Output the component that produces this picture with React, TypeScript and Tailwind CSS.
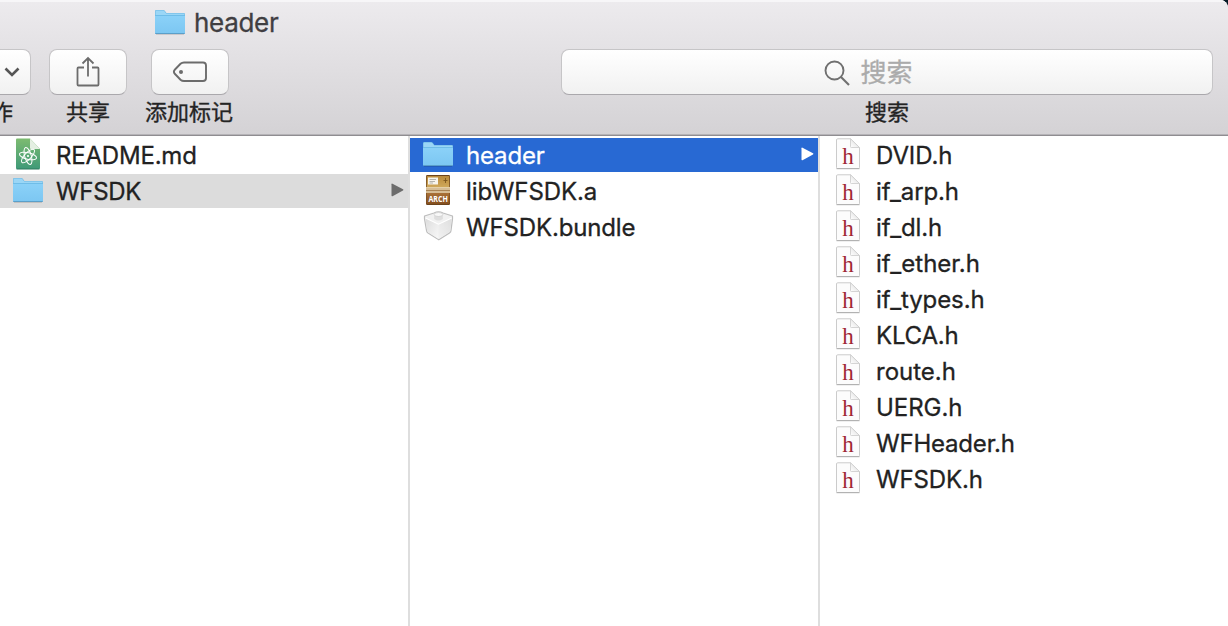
import React from "react";

function Folder() {
  return (
    <svg width="32" height="28" viewBox="0 0 32 28" className="block shrink-0">
      <defs>
        <linearGradient id="folderFace" x1="0" y1="0" x2="0" y2="1">
          <stop offset="0" stopColor="#8bd1f8" />
          <stop offset="1" stopColor="#7cc7f2" />
        </linearGradient>
      </defs>
      <g transform="translate(0 -1)">
        <path d="M1 3.200Q1 2 2.200 2H9.200Q10.200 2 10.800 2.800L12.400 5H29.800Q31 5 31 6.200V25.500H1Z" fill="#6ab6e2" />
        <path d="M1.500 3.300Q1.500 2.500 2.300 2.500H9.100Q9.900 2.500 10.500 3.300L12.200 5.600H30.500V7H1.500Z" fill="#9ad6f6" />
        <path d="M1 7.500H31V24.500Q31 25.500 30 25.500H2Q1 25.500 1 24.500Z" fill="url(#folderFace)" />
        <path d="M1 7.500H31" stroke="#6fbde8" strokeWidth="1" />
        <path d="M1.300 25.500H30.700" stroke="#5b9fc9" strokeWidth="1" />
        <path d="M2 26.500H30" stroke="#000" strokeOpacity=".12" strokeWidth="1" />
      </g>
    </svg>
  );
}

function Markdown() {
  return (
    <svg width="32" height="34" viewBox="0 0 32 34" className="block shrink-0">
      <defs>
        <linearGradient id="mdFill" x1="0" y1="0" x2="0" y2="1">
          <stop offset="0" stopColor="#7dbb70" />
          <stop offset="1" stopColor="#3f9a78" />
        </linearGradient>
      </defs>
      <path d="M4 1.500Q4 .5 5 .5H18L28 11V30Q28 31 27 31H5Q4 31 4 30Z" fill="url(#mdFill)" />
      <path d="M4.500 31H27.500" stroke="#2f7a5e" strokeWidth="1" />
      <path d="M18 .5L28 11H19Q18 11 18 10Z" fill="#e4efe2" />
      <g fill="none" stroke="#fff" strokeWidth="1">
        <ellipse cx="16" cy="18" rx="8.800" ry="3.300" transform="rotate(14 16 18)" />
        <ellipse cx="16" cy="18" rx="8.800" ry="3.300" transform="rotate(74 16 18)" />
        <ellipse cx="16" cy="18" rx="8.800" ry="3.300" transform="rotate(-46 16 18)" />
      </g>
      <circle cx="16" cy="18" r="1.100" fill="#fff" />
    </svg>
  );
}

function Archive() {
  return (
    <svg width="32" height="34" viewBox="0 0 32 34" className="block shrink-0">
      <defs>
        <linearGradient id="boxTop" x1="0" y1="0" x2="0" y2="1">
          <stop offset="0" stopColor="#b98a3b" />
          <stop offset="1" stopColor="#d3ad5f" />
        </linearGradient>
        <linearGradient id="boxFront" x1="0" y1="0" x2="0" y2="1">
          <stop offset="0" stopColor="#a97137" />
          <stop offset="1" stopColor="#86501f" />
        </linearGradient>
      </defs>
      <rect x="4" y="1" width="24" height="30" rx="1.200" fill="#6b431c" />
      <rect x="4.700" y="2" width="22.600" height="13" fill="url(#boxTop)" />
      <rect x="4.500" y="19" width="23" height="11" fill="url(#boxFront)" />
      <rect x="4" y="13.500" width="24" height="5.500" fill="#d6bd95" />
      <path d="M4 16.500H28" stroke="#a98455" />
      <path d="M4 13.500H28" stroke="#e9d7b5" strokeWidth=".8" />
      <rect x="6" y="3.500" width="10" height="7" fill="#f7f4ec" />
      <path d="M7.500 5.500H14M7.500 7.500H13M7.500 9H11" stroke="#a5a39d" strokeWidth=".8" />
      <path d="M23.500 4V9M21.500 6.500H25.500" stroke="#7c571f" strokeWidth=".9" />
      <text x="16.200" y="28.200" textAnchor="middle" fontFamily="Open Sans, sans-serif" fontSize="8" fontWeight="700" fill="#fff" textLength="19.500" lengthAdjust="spacingAndGlyphs">ARCH</text>
    </svg>
  );
}

function Bundle() {
  return (
    <svg width="32" height="34" viewBox="0 0 32 34" className="block shrink-0">
      <defs>
        <linearGradient id="brickL" x1="0" y1="0" x2="1" y2="1">
          <stop offset="0" stopColor="#dcdcdc" />
          <stop offset="1" stopColor="#f8f8f8" />
        </linearGradient>
        <linearGradient id="brickR" x1="1" y1="0" x2="0" y2="1">
          <stop offset="0" stopColor="#dedede" />
          <stop offset="1" stopColor="#f2f2f2" />
        </linearGradient>
      </defs>
      <path d="M2.500 6L12 3Q16.500 .5 21 3L30.500 6V9L29 20.500Q29 22 27.500 23L16.800 29.800L6 23Q4.600 22 4.500 20.500L2.500 9Z" fill="#f1f1f1" stroke="#bdbdbd" strokeWidth="1.200" strokeLinejoin="round" />
      <path d="M3.500 8L16.500 14.500V29L6 22.300Q5.300 21.500 5 20Z" fill="url(#brickL)" />
      <path d="M29.700 8L16.500 14.500V29L27.500 22Q28.200 21.500 28.400 20Z" fill="url(#brickR)" />
      <path d="M3.500 8L16.500 14.200L29.700 8" fill="none" stroke="#fff" strokeWidth="1.200" />
      <path d="M12.200 4.500V9Q16.500 12 20.800 9V4.500" fill="#dedede" />
      <ellipse cx="16.500" cy="4.500" rx="4.300" ry="2" fill="#f8f8f8" stroke="#c9c9c9" strokeWidth=".7" />
    </svg>
  );
}

function HeaderFile() {
  return (
    <svg width="32" height="34" viewBox="0 0 32 34" className="block shrink-0">
      <defs>
        <linearGradient id="foldFill" x1="0" y1="1" x2="1" y2="0">
          <stop offset="0" stopColor="#fff" />
          <stop offset="1" stopColor="#d9d9d9" />
        </linearGradient>
      </defs>
      <path d="M4.500 2Q4.500 .8 5.700 .8H18.500L27.500 9.500V29.500Q27.500 30.500 26.500 30.500H5.500Q4.500 30.500 4.500 29.500Z" fill="#fcfcfc" stroke="#cbcbcb" />
      <path d="M4.500 30.700H27.500" stroke="#adadad" />
      <path d="M18.500 .8L27.500 9.500H19.300Q18.500 9.500 18.500 8.700Z" fill="url(#foldFill)" stroke="#cfcfcf" strokeWidth=".9" />
      <text x="16" y="25.500" textAnchor="middle" fontFamily="Liberation Serif, serif" fontSize="23" fill="#9f2634">h</text>
    </svg>
  );
}

type IconKind = "folder" | "md" | "arch" | "bundle" | "h";

function Icon({ kind }: { kind: IconKind }) {
  if (kind === "folder") return <Folder />;
  if (kind === "md") return <Markdown />;
  if (kind === "arch") return <Archive />;
  if (kind === "bundle") return <Bundle />;
  return <HeaderFile />;
}

type Item = { name: string; kind: IconKind; spacing: string; state?: "selected" | "path" };

function Row({ item }: { item: Item }) {
  const tone =
    item.state === "selected" ? "bg-[#2869d3] text-white" : item.state === "path" ? "bg-[#dcdcdc] text-[#222]" : "text-[#222]";
  return (
    <li className={`flex h-[34px] items-center pl-3 pr-1 ${tone}`}>
      <Icon kind={item.kind} />
      <span className={`ml-3 flex-1 whitespace-nowrap pt-0.5 text-[24px] leading-[34px] [-webkit-text-stroke:0.3px] ${item.spacing}`}>{item.name}</span>
      {item.state && (
        <svg width="13" height="14" viewBox="0 0 13 14" className="mb-0.5 block">
          <path d="M.5 1.300Q.5 .3 1.500 .7L12 6.200Q12.900 6.800 12 7.400L1.500 13.200Q.5 13.500 .5 12.500Z" fill={item.state === "selected" ? "#fff" : "#6c6c6c"} />
        </svg>
      )}
    </li>
  );
}

function Column({ items, className }: { items: Item[]; className: string }) {
  return (
    <ul className={`flex flex-col gap-0.5 pt-0.5 ${className}`}>
      {items.map((item) => (
        <Row key={item.name} item={item} />
      ))}
    </ul>
  );
}

const first: Item[] = [
  { name: "README.md", kind: "md", spacing: "tracking-[-0.2px]" },
  { name: "WFSDK", kind: "folder", spacing: "tracking-[-0.3px]", state: "path" },
];

const second: Item[] = [
  { name: "header", kind: "folder", spacing: "tracking-[-0.15px]", state: "selected" },
  { name: "libWFSDK.a", kind: "arch", spacing: "tracking-[-0.1px]" },
  { name: "WFSDK.bundle", kind: "bundle", spacing: "tracking-[-0.15px]" },
];

const third: Item[] = [
  { name: "DVID.h", kind: "h", spacing: "tracking-[-0.1px]" },
  { name: "if_arp.h", kind: "h", spacing: "tracking-[-0.15px]" },
  { name: "if_dl.h", kind: "h", spacing: "tracking-[-0.1px]" },
  { name: "if_ether.h", kind: "h", spacing: "tracking-[0px]" },
  { name: "if_types.h", kind: "h", spacing: "tracking-[-0.1px]" },
  { name: "KLCA.h", kind: "h", spacing: "tracking-[-0.2px]" },
  { name: "route.h", kind: "h", spacing: "tracking-[0px]" },
  { name: "UERG.h", kind: "h", spacing: "tracking-[-0.05px]" },
  { name: "WFHeader.h", kind: "h", spacing: "tracking-[-0.2px]" },
  { name: "WFSDK.h", kind: "h", spacing: "tracking-[-0.15px]" },
];

const face = "flex h-[46px] items-center justify-center border border-[#c6c5c7] border-b-[#aaa8ac] bg-linear-to-b from-white to-[#f1f1f1]";
const caption = "whitespace-nowrap text-[22px] leading-[34px] text-[#242424] [-webkit-text-stroke:0.35px]";

export default function App() {
  return (
    <div className="h-[626px] w-[1228px] overflow-hidden bg-[#061a26] font-['Inter','Noto_Sans_CJK_SC',sans-serif]">
      <div className="flex h-full flex-col overflow-hidden rounded-tr-[8px] bg-white">
        <header className="flex h-[136px] shrink-0 flex-col border-b border-[#8f8d91] bg-linear-to-b from-[#edebee] to-[#d4d2d5] shadow-[inset_0_2px_0_#f7f6f8,inset_0_-1px_0_#b5b3b7]">
          <div className="flex h-[49px] items-center pb-1 pl-[154px]">
            <Folder />
            <h1 className="ml-2 whitespace-nowrap text-[26px] leading-8 tracking-[-0.3px] text-[#403e42] [-webkit-text-stroke:0.3px]">header</h1>
          </div>
          <div className="flex items-start">
            <div className="w-[31px]">
              <button className={`${face} w-[31px] rounded-r-[8px] border-l-0 pr-[6px]`}>
                <svg width="18" height="12" viewBox="0 0 18 12" className="block shrink-0">
                  <path d="M2.500 2.500L9 9L15.500 2.500" fill="none" stroke="#555" strokeWidth="2.600" />
                </svg>
              </button>
              <div className={`flex w-[13px] justify-end overflow-hidden ${caption}`}>作</div>
            </div>
            <div className="ml-[18px] flex w-[78px] flex-col items-center">
              <button className={`${face} w-full rounded-[8px]`}>
                <svg width="24" height="32" viewBox="0 0 24 32" className="block">
                  <path d="M8 11.500H2.500Q1.500 11.500 1.500 12.500V28.500Q1.500 29.500 2.500 29.500H21.500Q22.500 29.500 22.500 28.500V12.500Q22.500 11.500 21.500 11.500H16M12 20.500V2M6.500 7.500L12 2L17.500 7.500" fill="none" stroke="#6c6c6c" strokeWidth="1.800" />
                </svg>
              </button>
              <span className={caption}>共享</span>
            </div>
            <div className="ml-6 flex w-[78px] flex-col items-center">
              <button className={`${face} w-full rounded-[8px]`}>
                <svg width="36" height="22" viewBox="0 0 36 22" className="block">
                  <path d="M12 1.500H31Q34 1.500 34 4.500V17Q34 20 31 20H12Q10 20 8.500 18.700L3 13Q.8 10.750 3 8.500L8.500 2.800Q10 1.500 12 1.500Z" fill="none" stroke="#6c6c6c" strokeWidth="1.900" />
                  <circle cx="9" cy="11" r="2" fill="#6c6c6c" />
                </svg>
              </button>
              <span className={`${caption} -ml-0.5`}>添加标记</span>
            </div>
            <div className="ml-[332px] flex w-[652px] flex-col items-center">
              <div className={`${face} w-full rounded-[8px] pr-[37px]`}>
                <svg width="26" height="26" viewBox="0 0 26 26" className="mr-[10px] mt-0.5 block">
                  <circle cx="10.500" cy="10.500" r="9" fill="none" stroke="#707070" strokeWidth="1.900" />
                  <path d="M17 17L25 25" stroke="#707070" strokeWidth="2.200" />
                </svg>
                <span className="pt-0.5 text-[26px] leading-8 text-[#ababab] [-webkit-text-stroke:0.3px]">搜索</span>
              </div>
              <span className={caption}>搜索</span>
            </div>
          </div>
        </header>
        <main className="flex flex-1">
          <Column items={first} className="w-[410px] border-r-2 border-[#dedede]" />
          <Column items={second} className="w-[410px] border-r-2 border-[#dedede]" />
          <Column items={third} className="flex-1" />
        </main>
      </div>
    </div>
  );
}
